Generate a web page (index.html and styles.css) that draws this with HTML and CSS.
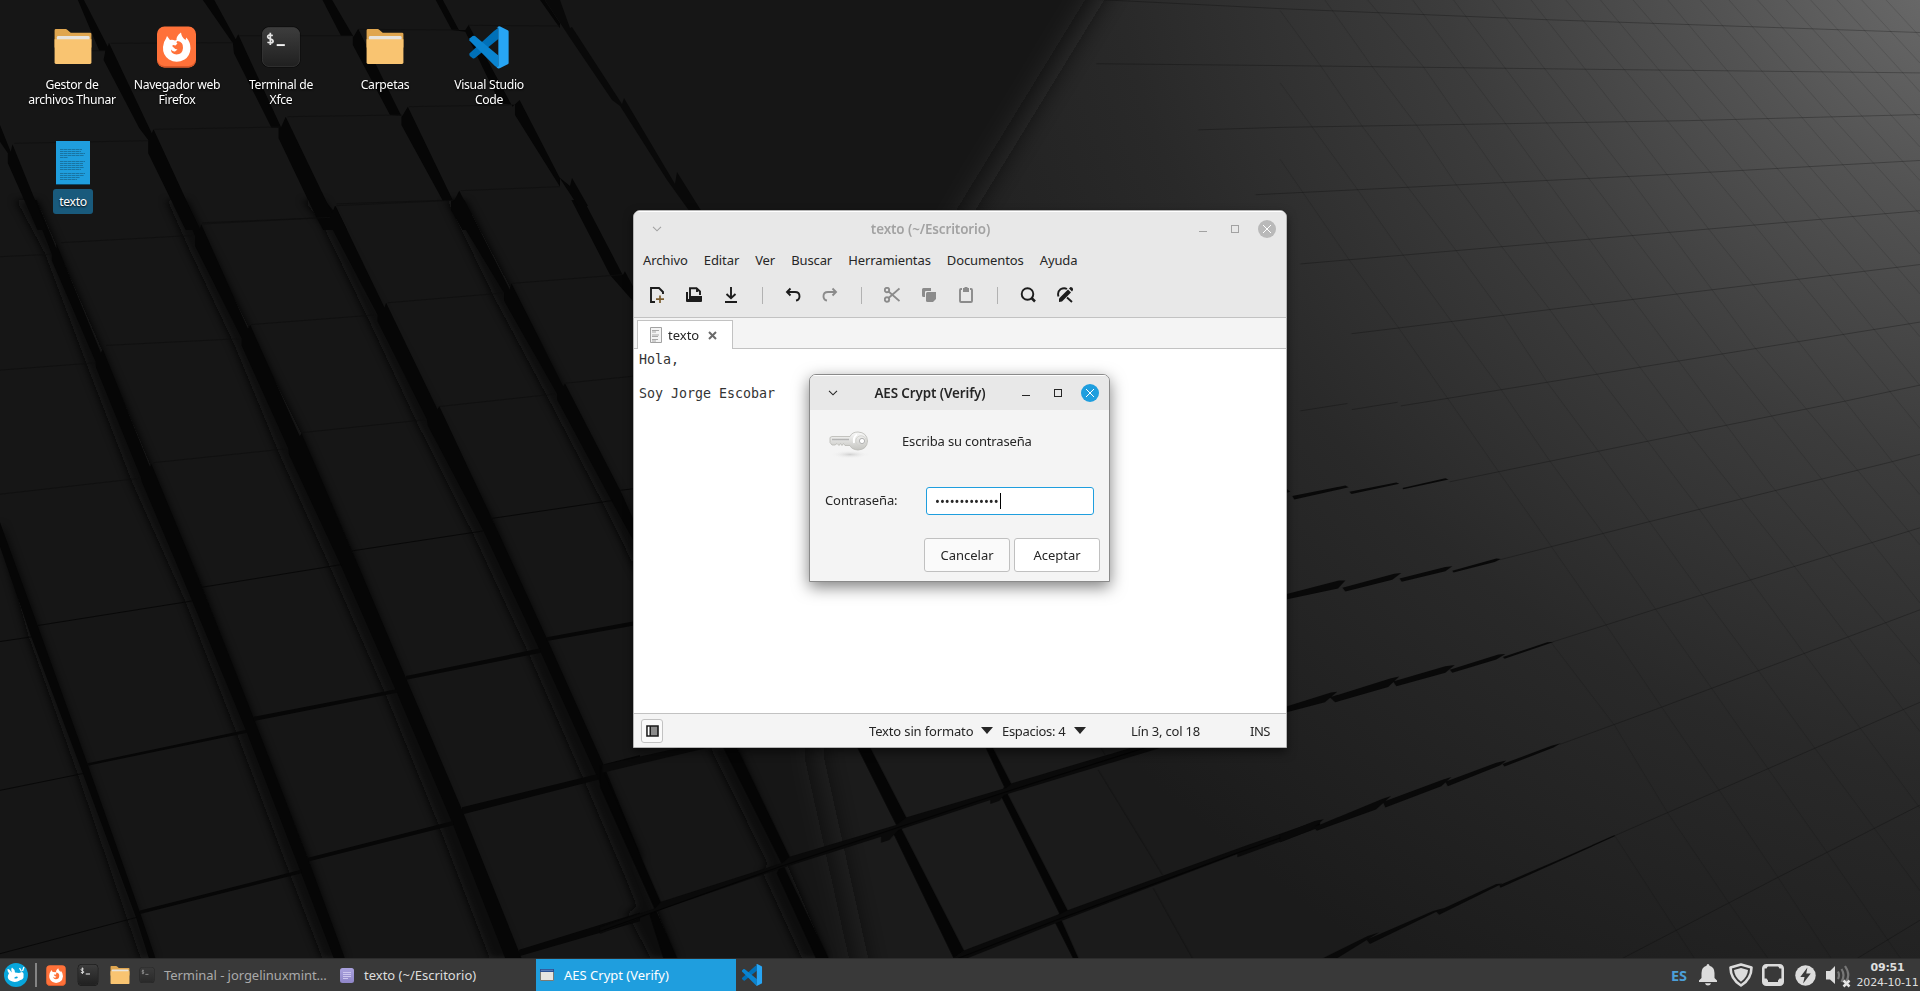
FILE: index.html
```html
<!DOCTYPE html>
<html lang="es">
<head>
<meta charset="utf-8">
<title>Escritorio</title>
<link rel="stylesheet" href="styles.css">
</head>
<body>
<svg width="0" height="0" class="defs">
  <defs>
    <linearGradient id="gTerm" x1="0" y1="0" x2="0" y2="1"><stop offset="0" stop-color="#3d3d3d"/><stop offset="1" stop-color="#202020"/></linearGradient>
    <linearGradient id="gKey" x1="0" y1="0" x2="0" y2="1"><stop offset="0" stop-color="#fafafa"/><stop offset="1" stop-color="#c4c4c0"/></linearGradient>
    <radialGradient id="gKeyShadow"><stop offset="0" stop-color="#cfcfcf"/><stop offset="1" stop-color="#f4f4f4" stop-opacity="0"/></radialGradient>
    <linearGradient id="gNote" x1="0" y1="0" x2="0" y2="1"><stop offset="0" stop-color="#aaa2de"/><stop offset="1" stop-color="#8f86c8"/></linearGradient>
  </defs>
  <symbol id="folder" viewBox="0 0 40 38">
    <path d="M0 1.500Q0 0 1.500 0H12Q13 0 14 1L17.500 4H38.500Q40 4 40 5.500V20H0Z" fill="#e0a64f"/>
    <path d="M2.500 9Q2.500 7.500 4 7.500H36.500Q38 7.500 38 9V14H2.500Z" fill="#e8e4dd"/>
    <path d="M0 11H40V36.500Q40 38 38.500 38H1.500Q0 38 0 36.500Z" fill="#f9c471"/>
  </symbol>
  <symbol id="firefox" viewBox="0 0 40 42">
    <rect x=".5" y=".5" width="39" height="41" rx="7.500" fill="#ff7139"/>
    <path d="M1 34Q1 41 8 41.500H32Q39 41 39 34Q38 39.500 32 40H8Q2 39.500 1 34Z" fill="#d9582a"/>
    <path d="M9.500 12.500 10.500 10 13.500 14Q16.500 13.500 18.500 14.500L20 14Q19.500 10 24.500 6.500Q25 11 29 14L29.800 11.500Q34 16 34 22.500Q33.500 30 28 33.500Q20 38 12.500 33.500Q6 29 6.500 21Q7 15.500 9.500 12.500Z" fill="#fff"/>
    <path d="M16 20.500Q15 18 19 19.500L21 17.500Q19 16.500 21 15Q27 16 26.500 22Q26 28.500 20 28.500Q14.500 28 14.500 23.500Q16.500 26 18.500 25.500L21 23.500Q18 23 16 20.500Z" fill="#ff7139"/>
  </symbol>
  <symbol id="terminal" viewBox="0 0 42 44">
    <rect x=".5" y=".5" width="41" height="43" rx="8" fill="#080808"/>
    <rect x="1.500" y="1.500" width="39" height="41" rx="7" fill="url(#gTerm)" stroke="#464646" stroke-width=".6"/>
    <path d="M12.500 10Q7 8.500 7 11.500Q7.200 13 10 13.600Q13 14.300 12.700 16.500Q11.500 18.600 6.800 17M9.800 7V20" fill="none" stroke="#e4e4e4" stroke-width="1.800"/>
    <path d="M16.500 19H25V21H16.500Z" fill="#f4f4f4"/>
  </symbol>
  <symbol id="vscode" viewBox="0 0 42 46">
    <path d="M0 29.500Q-.3 31 .5 32L3.500 34.500Q5 35.200 6 34.300L31 14V2L26 5.500Z" fill="#0070b8"/>
    <path d="M0 15.500Q-.3 14 .5 13L3.500 10.700Q5 10 6 10.800L31 31.500V45.500L27 42.500Z" fill="#0a84d0"/>
    <path d="M31 .5Q32 0 33 .5L41 4.500Q42 5 42 6V39.500Q42 40.500 41 41L33 45Q31 46 29 44Q31 44.500 31 42.500V3Q31 1 29 2Z" fill="#27a5f4"/>
  </symbol>
</svg>

<main class="desktop">
  <svg class="wallpaper" width="1920" height="991" viewBox="0 0 1920 991">
    <defs>
      <radialGradient id="glow" gradientUnits="userSpaceOnUse" cx="0" cy="0" r="1" gradientTransform="translate(1960 -40) rotate(128) scale(1150 1320)">
        <stop offset="0" stop-color="#6e6e6e"/><stop offset=".2" stop-color="#535353"/><stop offset=".42" stop-color="#3c3c3c"/><stop offset=".68" stop-color="#292929"/><stop offset="1" stop-color="#1b1b1b"/>
      </radialGradient>
      <filter id="soft" x="-20%" y="-20%" width="140%" height="140%"><feGaussianBlur stdDeviation="15"/></filter>
      <filter id="edge"><feGaussianBlur stdDeviation="5 3"/></filter>
    </defs>
    <rect width="1920" height="991" fill="url(#glow)"/>
    <path d="M-90-90H1150L960 220L800 500L815 760L890 1100H-90Z" fill="#121212" filter="url(#soft)"/>

    <!-- shaded sides of the columns -->
    <g fill="#0c0c0c" filter="url(#edge)">
      <g transform="translate(0 200) scale(.40816 .4847)">
        <path d="M0 690 70 900 190 1183 310 1480 345 1565H375L210 1165 90 878 0 665Z"/>
        <path d="M40 0 110 110 215 345 325 585 455 830 580 1100 710 1390 790 1565H840L755 1360 495 798 250 310 90 0Z"/>
        <path d="M410 0 460 95 575 300 685 525 810 760 945 1020 1075 1290 1200 1565H1265L862 723 738 482 455 0Z"/>
        <path d="M745 0 790 50 905 250 1025 465 1160 690 1295 935 1430 1195 1568 1470V1350L1205 657 790 0Z"/>
        <path d="M1095 0 1215 208 1345 412 1480 630 1568 780V690L1138 0Z"/>
      </g>
      <g transform="translate(600 740) scale(.4592 .3333)">
        <path d="M0 210 80 500 60 520 110 655H165L5 90Z M240 22 365 370 355 400 440 655H495L298 22Z"/>
      </g>
    </g>

    <!-- left field -->
    <g transform="translate(0 200) scale(.40816 .4847)" fill="#060606">
      <path d="M0 665 92 878 215 1165 343 1470 381 1565H365L333 1480 203 1183 76 900 0 715Z"/>
      <path d="M90 0 138 100 138 90 247 315 252 308 367 550 371 545 495 798 622 1070 755 1360 845 1565H818L736 1385 603 1095 470 825 347 580 345 572 235 345 234 333 127 125V112L75 0Z"/>
      <path d="M455 0 490 60 493 50 607 265 613 258 734 487 739 482 862 723 995 987 1132 1258 1272 1552 1278 1565H1238L1108 1285 970 1012 834 752 708 525 706 512 592 300 592 285 478 95V75L440 0Z"/>
      <path d="M795 0 817 22 822 12 942 222 946 212 1072 432 1076 425 1205 657 1340 905 1480 1168 1568 1350V1390L1463 1190 1322 928 1184 682 1048 465 1046 453 925 250V237L808 50V38L770 0Z"/>
      <path d="M1138 0 1249 185 1253 172 1380 385 1384 378 1520 600 1568 690V728L1498 620 1365 412V400L1235 208V192L1110 18V0Z"/>
      <path d="M1430 0 1526 155 1531 147 1568 205V225L1495 155 1400 0Z"/>
      <g fill="#070707">
        <path d="M622 1066 975 1009V1016L622 1075Z M215 1162 605 1093V1099L215 1167Z M343 1466 738 1382V1389L343 1473Z M755 1357 1110 1281V1290L755 1365Z M995 982 1325 925V934L995 990Z M1132 1253 1465 1184V1196L1132 1268Z M1272 1547 1568 1470V1488L1272 1560Z M1340 902 1568 867V876L1340 910Z M1480 1164 1568 1145V1158L1480 1178Z"/>
      </g>
      <g fill="none" stroke="#070707" stroke-width="2">
        <path d="M92 878 480 826M495 799 838 752M862 724 1190 682M1205 657 1500 620M1520 599 1568 594M0 911 80 901M0 1218 205 1183M0 1555 335 1480"/>
      </g>
      <g fill="none" stroke="#0e0e0e" stroke-width="1.600">
        <path d="M0 117 125 112M0 351 232 336M0 607 345 574M150 88 475 73M260 300 590 286M375 542 705 513M495 47 805 36M615 257 922 237M740 480 1045 453M825 8 1108 0M950 212 1232 192M1078 426 1362 400M1255 172 1525 154M1386 378 1568 362"/>
      </g>
    </g>

    <!-- upper left field -->
    <g transform="scale(.35714 .33333)" fill="#060606">
      <path d="M235 0 302 140 305 128 425 400 430 388 560 690H520L415 460V420L390 385 290 180 295 152H278L218 0Z"/>
      <path d="M600 0 660 118 667 103 787 382 800 350 930 640 938 617 972 690H905L885 650 780 415V383H760L655 160 652 130 568 0Z"/>
      <path d="M930 0 990 110 1003 86 1125 350 1142 320 1270 605 1286 572 1342 690H1295L1263 630V602H1240L1124 375V347L1092 345 988 135V108H955L903 0Z"/>
      <path d="M1240 0 1285 90 1303 90 1312 75 1435 320 1455 300 1568 535V560L1442 345V315L1400 310 1303 95 1265 90 1220 0Z"/>
      <path d="M1525 0 1568 70V85L1512 0Z M0 375 30 455 35 433 132 690H105L22 490V460L0 425Z"/>
      <g stroke="#0e0e0e" stroke-width="2"><path d="M160 152H295M40 430 415 422M310 130 652 128M432 388 785 381M670 107H985M805 350 1125 345M568 672 925 652M1005 88 1285 90M1145 320 1430 315M942 617 1270 601M1312 76 1568 78M1290 572 1568 560"/></g>
    </g>
    <g fill="#060606">
      <path d="M560 0 570 28 572 27 622 104 624 98 675 184 677 172 702 212H690L667 180 620 106 612 100 570 38 545 0Z" opacity=".8"/>
      <path d="M559 177 570 186 572 178 588 206H578Z"/>
    </g>

    <!-- lower middle field -->
    <g transform="translate(600 740) scale(.4592 .3333)" fill="#050505">
      <path d="M0 75 8 95 133 488 122 510 168 655H138L108 525 118 505 0 140Z"/>
      <path d="M272 0 290 0 413 350 400 378 498 655H470L385 400 395 370 268 22Z"/>
      <path d="M550 0H580L668 235 655 262 793 632 770 655 637 275 645 255 560 22Z"/>
      <path d="M832 0H847L897 135 887 160 1020 515 1005 540 1042 655H1030L990 545 1000 520 872 165 880 140Z"/>
      <g fill="#0a0a0a">
        <path d="M5 75 200 15H260L5 98Z"/>
        <path d="M0 562 120 505 133 485 398 368 413 350 645 255 668 232 885 143 897 130 1160 22H1225L880 165 870 182 850 192V180L650 270 630 300 612 308V290L395 385 120 515 0 582Z"/>
        <path d="M770 655 795 630 1005 520 1020 510 1410 315 1568 240V262L1388 352V342L1000 545 800 655Z"/>
      </g>
      <path d="M0 574 398 377 885 155 1190 22M780 655 1000 537 1390 338 1568 252" fill="none" stroke="#020202" stroke-width="2"/>
      <path d="M1085 90 1225 405M1205 445 1290 655M1090 22 1100 45" fill="none" stroke="#111" stroke-width="1.500"/>
    </g>

    <!-- right field -->
    <g transform="translate(1280 0) scale(.40816 .6122)">
      <g fill="none" stroke="#000" stroke-opacity=".38" stroke-width="1.300">
        <path d="M-480-2 0 14 650 32 1568 53M-450 104 0 107 750 113 1568 119M-200 212 0 208 1000 197 1568 187M-60 318 0 316 950 285 1568 262M50 431 1050 374 1568 344M175 545 1160 465 1568 432M50 671 165 659M176 669 288 657M296 663 880 600 1270 558 1568 526M415 787 780 737 1385 655 1568 629M540 914 905 852 1500 754 1568 742M670 1048 920 995 1568 862M685 1216 935 1155 1568 996M820 1365 1568 1147M840 1565 1220 1433 1568 1315M1415 1565 1568 1503"/>
      </g>
      <g fill="none" stroke="#000" stroke-opacity=".2" stroke-width="1.400">
        <path d="M820 1365 1015 1565M665 1050 820 1185 950 1328 1100 1475 1195 1565M0 260 170 425 290 535 410 650 535 770 665 893 800 1022 935 1155 1075 1290 1220 1433 1350 1565M0 135 185 305 300 415 420 525 540 635 660 752 790 870 920 995 1055 1122 1195 1255 1340 1392 1520 1565M0 17 100 108 200 205 310 303 430 408 545 513 655 625 780 737 905 852 1035 972 1175 1098 1310 1222 1455 1352 1568 1455M110 0 225 108 335 205 430 300 540 400 660 505 775 610 900 720 1025 830 1150 945 1285 1068 1420 1188 1568 1320M215 0 350 108 640 385 1000 705 1260 925 1568 1195M325 0 545 195 860 485 1200 790 1568 1085M425 0 755 290 1080 575 1568 985M520 0 640 105 850 285 1160 565 1568 890M615 0 848 198 1050 374 1270 558 1500 754 1568 808M700 0 950 198 1170 374 1568 700M785 0 1030 195 1360 460 1568 630M865 0 1110 190 1568 550M950 0 1190 190 1568 480M1030 0 1270 185 1568 415M1100 0 1350 190 1568 350M1170 0 1568 295M1240 0 1568 240M1300 0 1568 195M1365 0 1568 150M1425 0 1568 103M1485 0 1568 60"/>
      </g>
      <g fill="#090909">
        <path d="M0 804 18 799 25 803 0 808ZM30 810 160 793 168 796 35 816ZM170 803 285 788 292 790 175 807ZM300 797 405 781 413 783 302 799Z"/>
        <path d="M0 973 145 948H160L142 961 0 981ZM153 960 280 937 297 936 275 947 160 966ZM293 945 405 926 422 925 405 933 298 950ZM422 932 530 912 541 913 526 918 425 935Z"/>
        <path d="M0 1157 125 1131 140 1130 110 1147 0 1166ZM122 1139 270 1108 292 1105 265 1122 135 1147ZM277 1113 405 1088 428 1086 405 1099 285 1121ZM416 1094 535 1069 552 1068 530 1077 422 1099ZM546 1073 655 1049 672 1048 550 1076Z"/>
        <path d="M0 1364 85 1341 107 1338 75 1356 0 1376ZM83 1351 250 1305 272 1300 235 1322 90 1357ZM252 1310 400 1273 420 1269 395 1284 258 1319ZM405 1277 530 1246 554 1242 540 1250 411 1284ZM545 1248 665 1218 688 1214 670 1221 550 1252Z"/>
        <path d="M105 1565 215 1529 242 1523 140 1565ZM212 1535 375 1488 402 1483 220 1542ZM383 1489 530 1444 545 1443 390 1494ZM537 1446 680 1405 820 1364V1366L540 1450Z"/>
      </g>
    </g>
  </svg>

  <section class="icons">
    <div class="shortcut"><svg class="pic pic-folder"><use href="#folder"/></svg><span class="label">Gestor de<br>archivos Thunar</span></div>
    <div class="shortcut"><svg class="pic pic-firefox"><use href="#firefox"/></svg><span class="label nudge">Navegador web<br>Firefox</span></div>
    <div class="shortcut"><svg class="pic pic-term"><use href="#terminal"/></svg><span class="label nudge">Terminal de<br>Xfce</span></div>
    <div class="shortcut"><svg class="pic pic-folder"><use href="#folder"/></svg><span class="label nudge">Carpetas</span></div>
    <div class="shortcut"><svg class="pic pic-code"><use href="#vscode"/></svg><span class="label nudge">Visual Studio<br>Code</span></div>
    <div class="shortcut"><svg class="pic pic-doc" viewBox="0 0 34 44"><path d="M0 0H34V43H0Z" fill="#1f9ede"/><path d="M0 43H34V44H0Z" fill="#0c4a69"/><path d="M4 8.500H26M4 10.500H25M4 12.500H29M4 14.500H28M4 16.500H12M4 20.500H29M4 22.500H27M4 24.500H27M4 26.500H28M4 28.500H25M4 32.500H29M4 34.500H28M4 36.500H24M4 38.500H21" stroke="#176f9c" stroke-width=".9" stroke-dasharray="3.500 .4"/></svg><span class="label selected">texto</span></div>
  </section>

  <section class="window editor">
    <header class="titlebar">
      <svg class="chev" viewBox="0 0 10 6"><path d="M1 .8 5 4.800 9 .8"/></svg>
      <h1 class="title">texto (~/Escritorio)</h1>
      <span class="min"></span><span class="max"></span>
      <svg class="close" viewBox="0 0 18 18"><circle cx="9" cy="9" r="9"/><path d="M5 5 13 13M13 5 5 13"/></svg>
    </header>
    <nav class="menu"><span>Archivo</span><span>Editar</span><span>Ver</span><span>Buscar</span><span>Herramientas</span><span>Documentos</span><span>Ayuda</span></nav>
    <div class="tools">
      <svg viewBox="0 0 16 16"><path d="M6 15H2V1H10L14 5V7" class="s"/><path d="M11 8.500V16M7 12.200H15" stroke="#7a5c2e" stroke-width="1.700" fill="none"/></svg>
      <svg viewBox="0 0 16 16"><path d="M4 11V1.200H10.500L14 4.500V8M11 1V5M1 5V14" class="s"/><path d="M3 9H16V14Q16 15 15 15H1Q0 15 0 14V5H2V12H3Z"/></svg>
      <svg viewBox="0 0 16 16"><path d="M8 0V11M3.500 7 8 11.200 12.500 7M2 15H14" class="s"/></svg>
      <i class="sep"></i>
      <svg viewBox="0 0 16 16"><path d="M5.500 1.500 2 5 5.500 8.500M2 5H10Q14.500 5 14.500 9.200Q14.500 13 11 13.500" class="s"/></svg>
      <svg viewBox="0 0 16 16" class="dim"><path d="M10.500 1.500 14 5 10.500 8.500M14 5H6Q1.500 5 1.500 9.200Q1.500 13 5 13.500" class="s"/></svg>
      <i class="sep"></i>
      <svg viewBox="0 0 16 16" class="dim"><circle cx="3" cy="3" r="2.200" class="s"/><circle cx="3" cy="12.500" r="2.200" class="s"/><path d="M4.500 4.500 15.500 14M4.500 11 15.500 1.500" class="s"/></svg>
      <svg viewBox="0 0 16 16" class="dim"><path d="M1 2.500Q1 1 2.500 1H10V4H5Q4 4 4 5V10H2.500Q1 10 1 8.500Z"/><path d="M5 6.500Q5 5 6.500 5H15V12L12 15H6.500Q5 15 5 13.500Z"/></svg>
      <svg viewBox="0 0 16 16" class="dim"><path d="M4 2H3Q2 2 2 3V14Q2 15 3 15H13Q14 15 14 14V3Q14 2 13 2H12" class="s"/><path d="M5 1H6.500V0H9.500V1H11V5H5Z"/></svg>
      <i class="sep"></i>
      <svg viewBox="0 0 16 16"><circle cx="7.500" cy="7" r="5.800" class="s"/><path d="M11.500 11 15 14.500" class="s s3"/></svg>
      <svg viewBox="0 0 16 16"><path d="M1.500 9.500Q0 5 3.500 2.300Q7 .2 10 2M10 10.500 15 15" class="s"/><path d="M2 11.500 11 2.500 14 5.500 5 14.500 2 15Z"/><path d="M12 1.500 13.500 0Q16.500.5 16 3L15 4.500Z"/></svg>
    </div>
    <div class="tabs"><div class="tab">
      <svg width="12" height="16" viewBox="0 0 12 16"><path d="M.5.5H11.500V15.500H.5Z" fill="#f4f4f4" stroke="#a2a2a2"/><path d="M2 3.500H9M2 5H6M2 8H9M2 9.500H8M2 12.500H8M2 14H6" stroke="#a8a8a8" stroke-width="1.200"/></svg>
      <span>texto</span>
      <svg class="tabx" width="9" height="9" viewBox="0 0 9 9"><path d="M1 1 8 8M8 1 1 8"/></svg>
    </div></div>
    <pre class="text">Hola,

Soy Jorge Escobar</pre>
    <footer class="status">
      <span class="side"><svg width="13" height="12" viewBox="0 0 13 12"><path d="M1 1H12V11H1Z" fill="#8a8a8a" stroke="#1a1a1a" stroke-width="1.600"/><path d="M1.800 1.800H3.500V10.200H1.800Z" fill="#fff"/><path d="M4.300 1V11" stroke="#1a1a1a" stroke-width="1.300"/></svg></span>
      <span class="lang">Texto sin formato</span><i class="tri"></i>
      <span class="esp">Espacios: 4</span><i class="tri"></i>
      <span class="pos">Lín 3, col 18</span><span class="ins">INS</span>
    </footer>
  </section>

  <section class="window dialog">
    <header class="titlebar">
      <svg class="chev" viewBox="0 0 10 6"><path d="M1 .8 5 4.800 9 .8"/></svg>
      <h2 class="title">AES Crypt (Verify)</h2>
      <span class="min"></span><span class="max"></span>
      <svg class="close" viewBox="0 0 18 18"><circle cx="9" cy="9" r="9"/><path d="M5 5 13 13M13 5 5 13"/></svg>
    </header>
    <div class="ask">
      <svg width="40" height="28" viewBox="0 0 40 28"><ellipse cx="21" cy="23.500" rx="19" ry="4" fill="url(#gKeyShadow)"/>
        <path d="M1 6.500 3 5.500H21Q23 1 29 1Q38 1.500 38.500 10Q38 18.500 29 19Q22.500 18.500 21 14.500H16L14.500 12.500 13 14.500 11.500 12.500 10 14.500 8 12.500 6 14H3L1 11.500Z" fill="url(#gKey)" stroke="#b7b7b3" stroke-width=".8"/>
        <path d="M3 8.500H20" stroke="#b4b4b4" stroke-width="1.500"/><circle cx="33" cy="10" r="2.600" fill="#fff" stroke="#aaa" stroke-width=".9"/><path d="M28 3.500Q24 6 25 12" stroke="#fff" stroke-width="2" fill="none"/><circle cx="32" cy="10" r="5.200" stroke="#d0d0cc" stroke-width=".8" fill="none"/></svg>
      <span>Escriba su contraseña</span>
    </div>
    <div class="field"><span class="flabel">Contraseña:</span><span class="input"><span class="dots">•••••••••••••</span><i class="caret"></i></span></div>
    <div class="actions"><span class="btn">Cancelar</span><span class="btn main">Aceptar</span></div>
  </section>

  <footer class="taskbar">
    <svg class="logo" width="24" height="24" viewBox="0 0 24 24"><circle cx="12" cy="12" r="12" fill="#08a6dc"/><path d="M3.500 6Q5.500 5.500 7 8.500L8 9.500Q6.500 6 8 4.500Q10.500 6 11 9.500L15 10 18 9Q20 9.500 19.500 13Q20 16 16.500 17Q11 20.500 6 17.500Q3 15.500 4 12.500Q4.500 11 5 10.500Q3 8 3.500 6Z" fill="#fff"/><path d="M15.500 5 17.500 8.500M20 4 18.500 8" stroke="#fff" stroke-width="1.300"/><path d="M10 15Q12 12.500 14 14Q13 16.500 10 15" fill="#08a6dc"/></svg>
    <i class="bar"></i>
    <svg class="t-ff"><use href="#firefox"/></svg>
    <svg class="t-term"><use href="#terminal"/></svg>
    <svg class="t-fold"><use href="#folder"/></svg>
    <div class="task minimized"><svg class="t-mini"><use href="#terminal"/></svg><span>Terminal - jorgelinuxmint…</span></div>
    <div class="task"><svg width="14" height="15" viewBox="0 0 14 15"><rect width="14" height="15" rx="2.500" fill="url(#gNote)"/><path d="M3 4.500H11M3 6.500H11M3 8.500H11M3 10.500H8" stroke="#d2ccf2" stroke-width=".9"/></svg><span>texto (~/Escritorio)</span></div>
    <div class="task active"><svg width="14" height="12" viewBox="0 0 14 12"><path d="M.5.5H13.500V11.500H.5Z" fill="#e7e5e0" stroke="#7b7b74"/><path d="M0 0H14V3H0Z" fill="#2c5295"/><path d="M1 1.300H13" stroke="#7a9cd0" stroke-width=".7"/></svg><span>AES Crypt (Verify)</span></div>
    <svg class="t-code"><use href="#vscode"/></svg>
    <div class="tray">
      <b class="lang-ind">ES</b>
      <svg class="bell" viewBox="0 0 18 22"><path d="M9 0Q10.300 0 10.500 1.700Q15.500 3 15.500 9V14L18 16.500V18H0V16.500L2.500 14V9Q2.500 3 7.500 1.700Q7.700 0 9 0ZM6 19.300H12Q11.500 21.500 9 21.500Q6.500 21.500 6 19.300Z"/></svg>
      <svg class="shield" viewBox="0 0 24 24"><path d="M12 1.500 22.500 4.500Q22.500 16 12 22.500Q1.500 16 1.500 4.500Z" fill="none" stroke="#dcdcdc" stroke-width="2.600" stroke-linejoin="round"/><path d="M12 5 19 7Q18.500 14 12 18.800Q5.500 14 5 7Z"/></svg>
      <svg class="net" viewBox="0 0 22 22"><rect x="1.300" y="1.300" width="19.400" height="19.400" rx="3" fill="none" stroke="#dcdcdc" stroke-width="2.600"/><path d="M2 14.500H4.500L6 16.500V18H16V16.500L17.500 14.500H20V21H2ZM2 2H6L4.500 4.500H2ZM20 2H16L17.500 4.500H20Z"/></svg>
      <svg class="power" viewBox="0 0 22 22"><circle cx="11" cy="11" r="10.700"/><path d="M13 2.500 5.500 12.500H10L8.500 19.500 16.500 9H11.800Z" fill="#393939"/></svg>
      <svg class="vol" viewBox="0 0 25 24"><path d="M0 7H4L9 2V20L4 15.500H0Z"/><path d="M12 7.500Q14 11 12 15M15.500 5Q19.500 11 15.500 18M19 2Q25 11 20 17" fill="none" stroke="#777" stroke-width="2.200"/><path d="M17.500 16.500 23.500 22.500M23.500 16.500 17.500 22.500" stroke="#e4e4e4" stroke-width="2.500"/></svg>
      <div class="clock"><b>09:51</b><span>2024-10-11</span></div>
    </div>
  </footer>
</main>
</body>
</html>
```
FILE: styles.css
```css
* { box-sizing: border-box; }
body { margin: 0; background: #131313; font: 13px/16px "Noto Sans", "Open Sans", sans-serif; color: #262626; overflow: hidden; }
.defs { position: absolute; }
.desktop { position: relative; width: 1920px; height: 991px; display: flex; flex-direction: column; justify-content: space-between; overflow: hidden; }
.wallpaper { position: absolute; inset: 0; }

/* desktop shortcuts */
.icons { position: relative; display: grid; grid-template-columns: repeat(5, 104px); grid-auto-rows: 114px; padding: 26px 0 0 20px; }
.shortcut { display: flex; flex-direction: column; align-items: center; gap: 9px; }
.pic { flex: none; margin-left: 1px; }
.pic-folder { width: 40px; height: 35px; margin: 3px 0 4px 2px; }
.pic-firefox { width: 41px; height: 42px; }
.pic-term { width: 42px; height: 42px; margin-left: 2px; }
.pic-code { width: 42px; height: 43px; margin-bottom: -1px; }
.pic-doc { width: 34px; height: 44px; margin: 1px 0 -5px 2px; }
.label { color: #fff; font-size: 12.200px; line-height: 15px; letter-spacing: -.3px; text-align: center; white-space: nowrap; text-shadow: 0 1px 2px #000; }
.nudge { margin-left: 2px; }
.selected { background: #195a7c; border-radius: 3px; width: 40px; margin-left: 2px; line-height: 25px; }

/* windows */
.window { position: absolute; display: flex; flex-direction: column; border-radius: 7px 7px 0 0; background: #f4f4f4; overflow: hidden; }
.editor { left: 633px; top: 210px; width: 654px; height: 538px; border: 1px solid #b4b4b4; box-shadow: 0 4px 10px rgba(0,0,0,.5); }
.dialog { left: 809px; top: 374px; width: 301px; height: 208px; border: 1px solid #8a8a8a; box-shadow: 0 5px 16px rgba(0,0,0,.5); }
.titlebar { flex: none; display: flex; align-items: center; height: 35px; background: #e8e8e8; color: #262626; border-top: 1px solid #fff; padding-bottom: 1px; }
.editor .titlebar { color: #a2a2a2; }
.chev { width: 10px; height: 6px; fill: none; stroke: currentColor; stroke-width: 1.100; margin-left: 18px; }
.title { flex: 1; margin: 0; font-size: 13.400px; font-weight: 600; line-height: 16px; text-align: center; letter-spacing: -.1px; white-space: nowrap; }
.min { width: 8px; height: 1px; background: currentColor; margin: 5px 24px 0 0; }
.max { width: 8px; height: 8px; border: 1px solid currentColor; margin-right: 19px; }
.close { width: 18px; height: 18px; margin-right: 10px; stroke: #fff; }
.close circle { fill: #1f9ede; stroke: none; }
.editor .close circle { fill: #b9b9b9; }

.menu { height: 35px; background: #e8e8e8; display: flex; gap: 16px; padding: 6px 0 0 9px; letter-spacing: -.1px; }
.tools { height: 37px; background: #e8e8e8; display: flex; align-items: center; gap: 21px; padding: 0 0 8px 15px; border-bottom: 1px solid #c2c2c2; }
.tools svg { width: 16px; height: 16px; fill: #1c1c1c; color: #1c1c1c; }
.tools .dim { fill: #8b8b8b; color: #8b8b8b; }
.tools .s { fill: none; stroke: currentColor; stroke-width: 1.900; }
.tools .s3 { stroke-width: 2.500; }
.sep { width: 1px; height: 17px; background: #b2b2b2; margin: 0 1px 0 2px; }
.tabs { height: 31px; padding: 2px 0 0 3px; border-bottom: 1px solid #c2c2c2; }
.tab { width: 96px; height: 29px; border: 1px solid #c2c2c2; border-bottom: 0; background: #fff; display: flex; align-items: center; padding-left: 12px; }
.tab span { width: 32px; margin: 0 8px 0 6px; }
.tabx { stroke: #6a6a6a; stroke-width: 2; }
.text { flex: 1; margin: 0; background: #fff; padding: 2px 0 0 5px; font: 13.300px/17px "DejaVu Sans Mono", monospace; color: #333; }
.status { height: 34px; display: flex; align-items: center; border-top: 1px solid #c2c2c2; padding-left: 7px; letter-spacing: -.15px; white-space: nowrap; }
.side { width: 22px; height: 24px; border: 1px solid #c2c2c2; border-radius: 3px; background: #fafafa; display: grid; place-items: center; margin-right: 206px; }
.lang { width: 106px; }
.esp { width: 66px; margin-left: 9px; letter-spacing: -.3px; }
.pos { width: 72px; margin-left: 45px; letter-spacing: -.2px; }
.ins { margin-left: 47px; letter-spacing: -.5px; }
.tri { border: 6px solid transparent; border-top: 7px solid #262626; border-bottom: 0; margin-left: 6px; }

/* password dialog */
.ask { display: flex; align-items: center; height: 62px; padding-left: 19px; gap: 33px; }
.ask svg { margin-top: 8px; }
.ask span { letter-spacing: -.15px; }
.field { display: flex; align-items: center; height: 56px; padding-left: 15px; }
.flabel { width: 101px; letter-spacing: -.1px; }
.input { width: 168px; height: 28px; border: 1px solid #1f9ede; border-radius: 3px; background: #fff; display: flex; align-items: center; padding-left: 8px; margin-top: 2px; }
.dots { font-size: 13px; width: 65px; }
.caret { width: 1px; height: 16px; background: #000; }
.actions { display: flex; justify-content: flex-end; gap: 4px; padding: 10px 9px 0 0; }
.btn { width: 86px; height: 34px; border: 1px solid #c0c0c0; border-radius: 3px; background: #fafafa; text-align: center; line-height: 33px; }
.main { background: #fff; }

/* panel */
.taskbar { position: relative; height: 33px; flex: none; background: #393939; border-top: 1px solid #2c2c2c; display: flex; align-items: center; padding-left: 4px; color: #dedede; white-space: nowrap; }
.taskbar > svg { flex: none; }
.bar { width: 2px; height: 24px; background: #858585; margin: 0 9px 0 7px; }
.t-ff { width: 20px; height: 21px; }
.t-term { width: 22px; height: 22px; margin: 0 11px; }
.t-fold { width: 20px; height: 18px; margin-right: 9px; }
.t-mini { width: 16px; height: 16px; }
.task { width: 196px; height: 32px; display: flex; align-items: center; gap: 10px; }
.task svg { flex: none; }
.task.minimized { width: 201px; gap: 9px; color: #aaa; letter-spacing: -.05px; }
.minimized svg { opacity: .6; }
.task.active { width: 200px; background: #1f9ede; color: #fff; padding-left: 4px; }
.t-code { width: 22px; height: 22px; margin-left: 5px; }
.tray { margin-left: auto; display: flex; align-items: center; fill: #dcdcdc; }
.lang-ind { color: #4c9fd8; font-size: 14.500px; margin-right: 10px; width: 18px; letter-spacing: -.2px; }
.bell { width: 18px; height: 22px; margin-right: 12px; }
.shield { width: 24px; height: 24px; margin-right: 9px; }
.net { width: 22px; height: 22px; margin-right: 11px; }
.power { width: 21px; height: 21px; margin-right: 10px; }
.vol { width: 25px; height: 24px; margin: 2px 4px 0 0; }
.clock { display: flex; flex-direction: column; align-items: center; width: 65px; font: 11px/15px "DejaVu Sans", sans-serif; letter-spacing: -.2px; }
```
